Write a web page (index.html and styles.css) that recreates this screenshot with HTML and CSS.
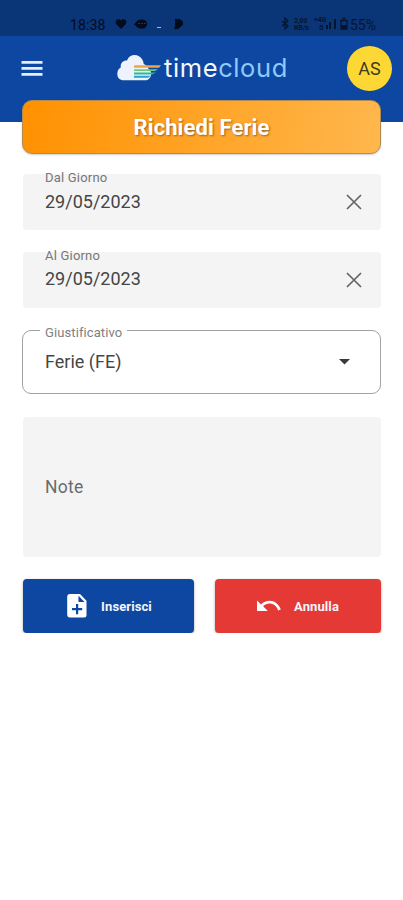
FILE: index.html
```html
<!DOCTYPE html>
<html lang="it">
<head>
<meta charset="utf-8">
<meta name="viewport" content="width=device-width, initial-scale=1">
<title>Richiedi Ferie</title>
<link rel="stylesheet" href="styles.css">
</head>
<body>
<header class="top">
  <div class="status">
    <span class="clock">18:38</span>
    <svg class="notices" width="72" height="12" viewBox="0 0 72 12">
      <path d="M6 11 1.400 6.200C-1 3 3-.8 6 2.600 9-.8 13 3 10.600 6.200z"/>
      <path d="M19 6.500l3-3.500c2-2 7-2 9 0l1.500 3-1.500 3c-2 2-7 2-9 0z"/>
      <path class="cut" d="M23 5.500h8"/>
      <path class="dash" d="M42 9.500h4"/>
      <path d="M60 1h5l3 2.500v3L65.500 9 63 11h-4l1-3z"/>
    </svg>
    <svg class="radio" width="70" height="14" viewBox="0 0 70 14">
      <path class="line" d="M2 4l6 5-3 3v-11L8 4l-6 5"/>
      <text x="14" y="6">2,00</text><text x="14" y="13">KB/s</text>
      <text x="34" y="5">+4G</text><text class="net" x="39" y="13">5</text>
      <path d="M46 8h2v4h-2zM49 5h2v7h-2zM54 2h2v10h-2z"/>
      <path class="line" d="M61 3.500h6v8.500h-6zM62.500 1.500h3"/><path d="M61 8h6v4h-6z"/>
    </svg>
    <span class="charge">55%</span>
  </div>
  <div class="bar">
    <svg class="menu" width="22" height="15" viewBox="0 0 22 15"><path d="M.5 0h21v2.700H.5zM.5 6h21v2.700H.5zM.5 12h21v2.700H.5z"/></svg>
    <div class="brand">
      <svg width="44" height="26" viewBox="0 0 44 26">
        <path fill="#edf2fc" d="M7 25.300C2.500 25.300.3 22.500.3 18.700c0-3.300 1.500-5.300 3.500-6.200C3 8 6.500 5 10 5.500c2-5.500 8-6.700 12-4.200 3 1.900 4.500 4.700 4.700 7.700 3 1 4.500 3 5 5.500 2 1 2.800 3 2.500 5-.7 3.500-3 5.800-6 5.800z"/>
        <path fill="#2a9fd0" d="M17 20.800h17l-3 2H17z"/>
        <path fill="#25b9a0" d="M17 17.500h22l-4 1.900H17z"/>
        <path fill="#74c57a" d="M17 14.200h24l-3 1.900H17z"/>
        <path fill="#e9a94a" d="M17 10.200h27l-2 2.600H17z"/>
      </svg>
      <span class="word">time<b>cloud</b></span>
    </div>
    <div class="avatar">AS</div>
  </div>
</header>
<main class="page">
  <h1 class="title">Richiedi Ferie</h1>
  <div class="field">
    <label>Dal Giorno</label><span class="value">29/05/2023</span>
    <svg class="clear" width="16" height="16" viewBox="0 0 16 16"><path d="M1 1l14 14M15 1L1 15"/></svg>
  </div>
  <div class="field second">
    <label>Al Giorno</label><span class="value">29/05/2023</span>
    <svg class="clear" width="16" height="16" viewBox="0 0 16 16"><path d="M1 1l14 14M15 1L1 15"/></svg>
  </div>
  <fieldset class="select">
    <legend><span>Giustificativo</span></legend>
    <span class="choice">Ferie (FE)</span>
    <svg width="11" height="6" viewBox="0 0 11 6"><path d="M0 0h11L5.500 5.600z"/></svg>
  </fieldset>
  <div class="note">Note</div>
  <div class="actions">
    <button class="btn add"><svg width="20" height="24" viewBox="0 0 20 24"><path fill-rule="evenodd" d="M2.500 0H13l6.500 6.800V21a2.500 2.500 0 0 1-2.500 2.500H2.500A2.500 2.500 0 0 1 .2 21V2.400A2.400 2.400 0 0 1 2.500 0zM11.500 1.800V8h6zM9 10v4H5v2.200h4v4h2.200v-4h4V14h-4v-4z"/></svg><span>Inserisci</span></button>
    <button class="btn undo"><svg width="24" height="12" viewBox="0 0 24 12"><path d="M0 .5l4 4C6.500 2 9.300.8 12.500.8c5 0 9.500 3.400 11.300 8.800l-2.700.9C19.700 6.200 16.400 3.600 12.500 3.600c-2.500 0-4.600.9-6.400 2.700l4.700 4.800H0z"/></svg><span>Annulla</span></button>
  </div>
</main>
</body>
</html>
```
FILE: styles.css
```css
* { box-sizing: border-box; }
body { margin: 0; background: #fff; font-family: Roboto, "Liberation Sans", sans-serif; color: #454545; }
.top { height: 122px; background: #0d47a1; }
.status { height: 36px; background: #0a3577; display: flex; align-items: flex-start; padding: 17px 27px 0 70px; color: #06152f; }
.clock { font-size: 14px; line-height: 16px; width: 45px; letter-spacing: .1px; color: #030b1c; }
.notices { margin-top: 1px; fill: #030b1c; }
.notices .cut { stroke: #0a3577; stroke-dasharray: 2 1; }
.notices .dash { stroke: #9fb9dd; }
.radio { margin: 0 0 0 auto; fill: #06152f; font-size: 7px; font-weight: 700; letter-spacing: -.1px; }
.radio .net { font-size: 8px; }
.radio .line { fill: none; stroke: #06152f; stroke-width: 1.300; }
.charge { font-size: 14px; line-height: 16px; }
.bar { height: 64px; display: flex; align-items: center; padding: 0 11px 0 21px; }
.menu { fill: #e6eefb; }
.brand { display: flex; align-items: center; margin-left: 74px; }
.word { font-family: Inter, sans-serif; font-size: 25.500px; line-height: 30px; margin-left: 3px; width: 128px; color: #f4f8ff; letter-spacing: .6px; }
.word b { font-weight: 400; color: #8ec9fb; }
.avatar { margin-left: auto; width: 45px; height: 45px; border-radius: 50%; background: #fdd835; color: #3f3b20; font-size: 18px; line-height: 46px; text-align: center; }
.page { padding: 0 22px; margin-top: -22px; }
.title { margin: 0; height: 54px; border: 1px solid #b38a50; border-radius: 10px; background: linear-gradient(100deg, #ff9100, #ffb74d); color: #fff; font-size: 22px; font-weight: 700; line-height: 53px; letter-spacing: .1px; text-align: center; text-shadow: 1px 1px 2px #9b631e; box-shadow: 0 1px 2px #0003; }
.field { position: relative; height: 56px; margin: 20px 0 0 1px; padding: 0 19px 0 22px; background: #f4f4f4; border-radius: 4px; display: flex; align-items: center; justify-content: space-between; }
.field.second { margin-top: 22px; }
.field.second .value { padding-bottom: 2px; }
.field label { position: absolute; left: 22px; top: -4px; font-size: 13px; line-height: 16px; letter-spacing: .2px; color: #777; }
.value { font-size: 18px; line-height: 24px; letter-spacing: 0; }
.clear { fill: none; stroke: #666; stroke-width: 1.700; }
.select { height: 72px; margin: 14px 0 0; border: 1px solid #a2a2a2; border-radius: 9px; padding: 0 30px 8px 22px; display: flex; align-items: center; justify-content: space-between; }
.select legend { font-size: 13px; line-height: 16px; margin-left: -5px; padding: 0 5px; color: #808080; letter-spacing: .1px; }
.select legend span { position: relative; top: 3px; }
.choice { font-size: 18px; line-height: 24px; }
.select svg { fill: #3a3a3a; }
.note { height: 140px; margin: 23px 0 0 1px; padding-left: 22px; background: #f4f4f4; border-radius: 4px; font-size: 17.500px; line-height: 141px; letter-spacing: .3px; color: #6b6b6b; }
.actions { display: flex; gap: 21px; margin: 22px 0 0 1px; }
.btn { height: 54px; border: 0; border-radius: 4px; padding: 0; display: flex; align-items: center; justify-content: center; font: 700 13px Roboto, sans-serif; letter-spacing: .1px; color: #f2f5fc; box-shadow: 0 1px 3px #0005; }
.btn svg { fill: #fff; }
.add { width: 171px; background: #0d47a1; gap: 14px; padding-left: 2px; }
.undo { width: 166px; background: #e53935; gap: 13px; }
```
